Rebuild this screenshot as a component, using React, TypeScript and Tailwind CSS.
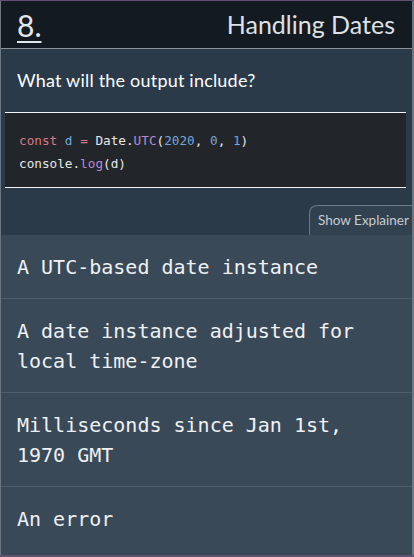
import React from "react";

const options: string[][] = [
  ["A UTC-based date instance"],
  ["A date instance adjusted for", "local time-zone"],
  ["Milliseconds since Jan 1st,", "1970 GMT"],
  ["An error"],
];

export default function App() {
  const sans = { fontFamily: "Lato, 'Open Sans', sans-serif" };
  const mono = { fontFamily: "'DejaVu Sans Mono', monospace" };
  return (
    <div className="w-[414px] h-[557px] bg-[#5f5170] pt-px pb-[2px] overflow-hidden">
      <div className="h-full flex flex-col border-l border-r-2 border-[#6c7782]">
        <header
          className="h-[48px] shrink-0 bg-[#141a21] flex items-center justify-between pl-[16px] pr-[17px] border-b border-[#8a9198]"
          style={sans}
        >
          <span className="text-[30px] leading-none text-[#e4e7ea] underline underline-offset-[4px] decoration-2">8.</span>
          <span className="text-[25px] leading-none text-[#dde1e4]">Handling Dates</span>
        </header>
        <section className="bg-[#2a3a49] shrink-0 flex flex-col">
          <p className="pt-[19px] pl-[16px] text-[18px] leading-[24px] tracking-[0.2px] text-white" style={sans}>
            What will the output include?
          </p>
          <div className="mt-[20px] ml-[4px] mr-[6px] border-y border-[#f2f4f5] bg-[#22262b] pl-[14px] pt-[16px] pb-[12px]" style={mono}>
            <div className="text-[12.7px] leading-[23px] text-[#e6e6e6] whitespace-pre">
              <span className="text-[#d87a86]">const</span>{" "}
              <span className="text-[#72a8dc]">d</span>{" "}
              <span className="text-[#d87a86]">=</span> Date.
              <span className="text-[#b38ad8]">UTC</span>(
              <span className="text-[#72a8dc]">2020</span>,{" "}
              <span className="text-[#72a8dc]">0</span>,{" "}
              <span className="text-[#72a8dc]">1</span>)
            </div>
            <div className="text-[12.7px] leading-[23px] text-[#e6e6e6] whitespace-pre">
              console.<span className="text-[#b38ad8]">log</span>(d)
            </div>
          </div>
          <div className="flex justify-end pt-[17px]">
            <div
              className="h-[30px] w-[103px] rounded-tl-[8px] border-t border-l border-[#6d7984] bg-[#314150] pl-[8px] flex items-center text-[13.5px] text-[#c5ccd2] whitespace-nowrap"
              style={sans}
            >
              Show Explainer
            </div>
          </div>
        </section>
        <ul className="flex-1 bg-[#3a4957] flex flex-col" style={mono}>
          {options.map((lines, i) => (
            <li
              key={i}
              className={
                "pl-[16px] pt-[17px] pb-[16px] text-[20px] leading-[30px] text-[#eef1f3] " +
                (i < options.length - 1 ? "border-b border-[#4d5d6b]" : "")
              }
            >
              {lines.map((l, j) => (
                <div key={j} className="whitespace-pre">{l}</div>
              ))}
            </li>
          ))}
        </ul>
      </div>
    </div>
  );
}
